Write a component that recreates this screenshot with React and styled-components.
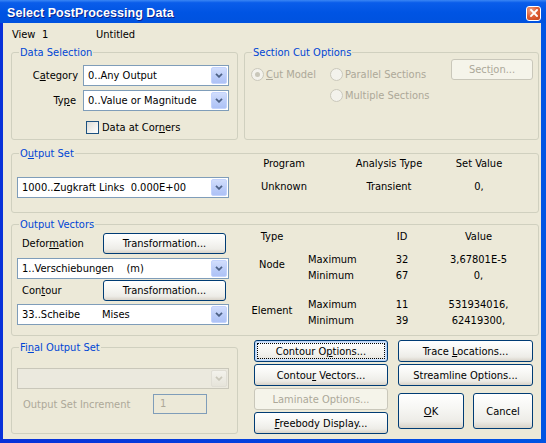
import React from 'react';
import styled, { createGlobalStyle, css } from 'styled-components';

const GlobalStyle = createGlobalStyle`
  html, body { margin: 0; padding: 0; background: #ECE9D8; }
  body {
    font-family: Tahoma, "DejaVu Sans Condensed", "Liberation Sans", sans-serif;
    font-size: 11px;
    color: #000;
  }
  * { box-sizing: border-box; }
`;

const Window = styled.div`
  width: 546px;
  height: 443px;
  display: flex;
  flex-direction: column;
  overflow: hidden;
`;

const TitleBar = styled.div`
  height: 23px;
  flex: none;
  display: flex;
  align-items: center;
  padding: 3px 5px 0 7px;
  background: linear-gradient(180deg, #3A86F4 0%, #0A5DEA 12%, #0054E3 55%, #0052DF 100%);
`;

const TitleText = styled.div`
  flex: 1;
  color: #fff;
  font-family: "Trebuchet MS", "Liberation Sans", sans-serif;
  font-weight: bold;
  font-size: 12.5px;
  letter-spacing: 0.05px;
  text-shadow: 1px 1px 0 #0A1E8A;
`;

const CloseButton = styled.div`
  width: 15px;
  height: 15px;
  border: 1px solid #fff;
  border-radius: 3px;
  background: radial-gradient(circle at 30% 25%, #F0A184 0%, #E0623A 45%, #C6411A 100%);
  display: flex;
  align-items: center;
  justify-content: center;
`;

const Frame = styled.div`
  flex: 1;
  display: flex;
  padding: 0 5px 4px 3px;
  background: linear-gradient(90deg, #0831D9 0%, #0054E3 100%);
`;

const Body = styled.div`
  flex: 1;
  background: #ECE9D8;
  display: flex;
  flex-direction: column;
  padding: 0 2px 0 8px;
`;

const HeaderRow = styled.div`
  height: 22px;
  flex: none;
  display: flex;
  align-items: center;
  padding-left: 1px;
`;

const HeaderCell = styled.span`
  width: ${p => (p.$w ? `${p.$w}px` : 'auto')};
`;

const TopRow = styled.div`
  display: flex;
  flex: none;
  gap: 6px;
  margin-top: 7px;
  height: 88px;
`;

const GroupBox = styled.div`
  position: relative;
  border: 1px solid #D0D0BF;
  border-radius: 3px;
  width: ${p => (p.$w ? `${p.$w}px` : 'auto')};
  flex: ${p => (p.$grow ? '1' : 'none')};
  height: ${p => p.$h}px;
  margin-top: ${p => p.$mt || 0}px;
`;

const Caption = styled.span`
  position: absolute;
  top: -7px;
  left: 7px;
  padding: 0 1px;
  line-height: 13px;
  background: #ECE9D8;
  color: #0046D5;
`;

const Key = styled.span`
  text-decoration: underline;
`;

const DataGrid = styled.div`
  display: grid;
  grid-template-columns: 66px 146px;
  grid-auto-rows: 21px;
  column-gap: 5px;
  row-gap: 4px;
  padding-top: 12px;
  align-items: center;
`;

const FieldLabel = styled.span`
  text-align: right;
  padding-right: ${p => p.$pr || 0}px;
`;

const CheckRow = styled.label`
  grid-column: 2;
  display: flex;
  align-items: center;
  gap: 3px;
  padding-left: 3px;
  margin-top: 6px;
  height: 13px;
  align-self: start;
`;

const CheckBox = styled.span`
  width: 13px;
  height: 13px;
  border: 1px solid #1C5180;
  background: linear-gradient(135deg, #DCDCD7 0%, #F2F2EF 60%, #FFFFFF 100%);
`;

const ComboBox = styled.div`
  width: ${p => p.$w}px;
  height: 21px;
  flex: none;
  margin-top: ${p => p.$mt || 0}px;
  display: flex;
  align-items: center;
  padding: 1px;
  border: 1px solid ${p => (p.$disabled ? '#C9C7BA' : '#7F9DB9')};
  background: ${p => (p.$disabled ? '#EBE9DE' : '#FFFFFF')};
`;

const ComboText = styled.span`
  flex: 1;
  padding-left: 3px;
  white-space: pre;
  overflow: hidden;
`;

const ComboArrow = styled.span`
  width: 16px;
  height: 17px;
  border-radius: 2px;
  display: flex;
  align-items: center;
  justify-content: center;
  ${p =>
    p.$disabled
      ? css`
          border: 1px solid #E0DED5;
          background: linear-gradient(180deg, #F3F2EC, #E6E4DA);
        `
      : css`
          border: 1px solid #C3D3FD;
          background: linear-gradient(180deg, #D2DEFC 0%, #B9CBF8 60%, #AEC2F6 100%);
        `}
`;

const Chevron = ({ color }) => (
  <svg width="8" height="5" viewBox="0 0 8 5">
    <path d="M1 0.8 L4 3.8 L7 0.8" fill="none" stroke={color} strokeWidth="1.8" />
  </svg>
);

const Combo = ({ w, mt, disabled, children }) => (
  <ComboBox $w={w} $mt={mt} $disabled={disabled}>
    <ComboText>{children}</ComboText>
    <ComboArrow $disabled={disabled}>
      <Chevron color={disabled ? '#C9C7BA' : '#4D6185'} />
    </ComboArrow>
  </ComboBox>
);

const Button = styled.button`
  font: inherit;
  color: #000;
  padding: 0;
  width: ${p => (p.$w ? `${p.$w}px` : '100%')};
  height: ${p => p.$h || 22}px;
  border: 1px solid #003C74;
  border-radius: 3px;
  background: linear-gradient(180deg, #FFFFFF 0%, #F7F7F4 40%, #EDECE7 80%, #D8D3C9 100%);
  flex: none;
  ${p =>
    p.$default &&
    css`
      box-shadow: inset 0 0 0 1px #BCD4F6, inset 0 0 0 2px #CEE3FC;
      outline: 1px dotted #000;
      outline-offset: -4px;
    `}
  &:disabled {
    border-color: #C9C7BA;
    background: #F5F4EA;
    color: #ACA899;
  }
`;

const SectionLayout = styled.div`
  display: flex;
  padding: 6px 5px 0 6px;
`;

const RadioColumn = styled.div`
  display: flex;
  flex-direction: column;
  gap: 8px;
  margin-top: 9px;
  width: ${p => (p.$w ? `${p.$w}px` : 'auto')};
`;

const RadioOption = styled.div`
  display: flex;
  align-items: center;
  gap: 2px;
  height: 13px;
  color: #ACA899;
  white-space: nowrap;
`;

const RadioDot = styled.span`
  width: 13px;
  height: 13px;
  border-radius: 50%;
  border: 1px solid #CAC8BB;
  background: #F3F2EC;
  display: flex;
  align-items: center;
  justify-content: center;
  &::after {
    content: '';
    display: ${p => (p.$checked ? 'block' : 'none')};
    width: 5px;
    height: 5px;
    border-radius: 50%;
    background: #C9C7BA;
  }
`;

const Spacer = styled.div`
  flex: 1;
`;

const OutputSetLayout = styled.div`
  display: flex;
  align-items: flex-start;
  padding-left: 5px;
`;

const InfoGrid = styled.div`
  display: grid;
  grid-template-columns: 80px 130px 50px;
  grid-auto-rows: 14px;
  row-gap: 9px;
  margin: 3px 0 0 15px;
  text-align: center;
  line-height: 14px;
  white-space: nowrap;
`;

const VectorsLayout = styled.div`
  display: flex;
  align-items: flex-start;
  padding-left: 5px;
`;

const LeftCol = styled.div`
  width: 212px;
  display: flex;
  flex-direction: column;
  padding-top: 8px;
`;

const VecRow = styled.div`
  height: 21px;
  flex: none;
  margin-top: ${p => p.$mt || 0}px;
  display: flex;
  align-items: center;
  justify-content: space-between;
  padding: 0 3px 0 5px;
`;

const VectorTable = styled.div`
  display: flex;
  flex-direction: column;
  margin: 4px 0 0 23px;
`;

const TableRow = styled.div`
  display: grid;
  grid-template-columns: 40px 78px 64px 89px;
  grid-auto-rows: 16px;
  margin-top: ${p => p.$mt || 0}px;
  line-height: 16px;
  white-space: nowrap;
`;

const Cell = styled.span`
  text-align: ${p => p.$align || 'center'};
  padding-left: ${p => p.$pl || 0}px;
`;

const EntityCell = styled.span`
  grid-row: span 2;
  display: flex;
  align-items: center;
  justify-content: center;
  padding-bottom: ${p => p.$lift || 0}px;
`;

const BottomRow = styled.div`
  display: flex;
  flex: none;
  align-items: flex-start;
  margin-top: 4px;
`;

const FinalLayout = styled.div`
  display: flex;
  flex-direction: column;
  padding-left: 5px;
`;

const IncRow = styled.div`
  display: flex;
  align-items: center;
  height: 20px;
  margin-top: 5px;
`;

const IncLabel = styled.span`
  width: 136px;
  padding-left: 6px;
  color: #ACA899;
`;

const IncInput = styled.div`
  width: 54px;
  height: 20px;
  border: 1px solid #7F9DB9;
  background: #ECE9D8;
  color: #ACA899;
  padding-left: 6px;
  line-height: 18px;
`;

const ButtonPanel = styled.div`
  display: grid;
  grid-template-columns: 134px 135px;
  column-gap: 10px;
  margin-left: 16px;
`;

const ButtonStack = styled.div`
  display: flex;
  flex-direction: column;
  gap: 2px;
`;

const OkRow = styled.div`
  display: flex;
  gap: 9px;
  margin-top: 5px;
`;

export default function App() {
  return (
    <>
      <GlobalStyle />
      <Window>
        <TitleBar>
          <TitleText>Select PostProcessing Data</TitleText>
          <CloseButton>
            <svg width="8" height="8" viewBox="0 0 8 8">
              <path d="M1 1 L7 7 M7 1 L1 7" stroke="#fff" strokeWidth="1.9" strokeLinecap="square" />
            </svg>
          </CloseButton>
        </TitleBar>
        <Frame>
          <Body>
            <HeaderRow>
              <HeaderCell $w={30}>View</HeaderCell>
              <HeaderCell $w={54}>1</HeaderCell>
              <HeaderCell>Untitled</HeaderCell>
            </HeaderRow>

            <TopRow>
              <GroupBox $w={227} $h={88}>
                <Caption>Data Selection</Caption>
                <DataGrid>
                  <FieldLabel>
                    C<Key>a</Key>tegory
                  </FieldLabel>
                  <Combo w={146}>0..Any Output</Combo>
                  <FieldLabel $pr={2}>
                    Ty<Key>p</Key>e
                  </FieldLabel>
                  <Combo w={146}>0..Value or Magnitude</Combo>
                  <CheckRow>
                    <CheckBox />
                    <span>
                      Data at Cor<Key>n</Key>ers
                    </span>
                  </CheckRow>
                </DataGrid>
              </GroupBox>

              <GroupBox $grow $h={88}>
                <Caption>Section Cut Options</Caption>
                <SectionLayout>
                  <RadioColumn $w={79}>
                    <RadioOption>
                      <RadioDot $checked />
                      <span>
                        <Key>C</Key>ut Model
                      </span>
                    </RadioOption>
                  </RadioColumn>
                  <RadioColumn>
                    <RadioOption>
                      <RadioDot />
                      <span>Parallel Sections</span>
                    </RadioOption>
                    <RadioOption>
                      <RadioDot />
                      <span>Multiple Sections</span>
                    </RadioOption>
                  </RadioColumn>
                  <Spacer />
                  <Button $w={82} $h={21} disabled>
                    Sect<Key>i</Key>on...
                  </Button>
                </SectionLayout>
              </GroupBox>
            </TopRow>

            <GroupBox $h={60} $mt={13}>
              <Caption>
                O<Key>u</Key>tput Set
              </Caption>
              <OutputSetLayout>
                <Combo w={212} mt={23}>1000..Zugkraft Links  0.000E+00</Combo>
                <InfoGrid>
                  <span>Program</span>
                  <span>Analysis Type</span>
                  <span>Set Value</span>
                  <span>Unknown</span>
                  <span>Transient</span>
                  <span>0,</span>
                </InfoGrid>
              </OutputSetLayout>
            </GroupBox>

            <GroupBox $h={112} $mt={11}>
              <Caption>Output Vectors</Caption>
              <VectorsLayout>
                <LeftCol>
                  <VecRow>
                    <span>
                      Defor<Key>m</Key>ation
                    </span>
                    <Button $w={123} $h={21}>Transformation...</Button>
                  </VecRow>
                  <Combo w={212} mt={4}>1..Verschiebungen    (m)</Combo>
                  <VecRow $mt={1}>
                    <span>
                      Con<Key>t</Key>our
                    </span>
                    <Button $w={123} $h={21}>Transformation...</Button>
                  </VecRow>
                  <Combo w={212} mt={3}>33..Scheibe       Mises</Combo>
                </LeftCol>
                <VectorTable>
                  <TableRow>
                    <Cell>Type</Cell>
                    <Cell />
                    <Cell>ID</Cell>
                    <Cell>Value</Cell>
                  </TableRow>
                  <TableRow $mt={7}>
                    <EntityCell $lift={7}>Node</EntityCell>
                    <Cell $align="left" $pl={16}>Maximum</Cell>
                    <Cell>32</Cell>
                    <Cell>3,67801E-5</Cell>
                    <Cell $align="left" $pl={16}>Minimum</Cell>
                    <Cell>67</Cell>
                    <Cell>0,</Cell>
                  </TableRow>
                  <TableRow $mt={13}>
                    <EntityCell $lift={4}>Element</EntityCell>
                    <Cell $align="left" $pl={16}>Maximum</Cell>
                    <Cell>11</Cell>
                    <Cell>531934016,</Cell>
                    <Cell $align="left" $pl={16}>Minimum</Cell>
                    <Cell>39</Cell>
                    <Cell>62419300,</Cell>
                  </TableRow>
                </VectorTable>
              </VectorsLayout>
            </GroupBox>

            <BottomRow>
              <GroupBox $w={227} $h={87} $mt={7}>
                <Caption>
                  Fi<Key>n</Key>al Output Set
                </Caption>
                <FinalLayout>
                  <Combo w={212} mt={20} disabled>
                    {' '}
                  </Combo>
                  <IncRow>
                    <IncLabel>Output Set Increment</IncLabel>
                    <IncInput>1</IncInput>
                  </IncRow>
                </FinalLayout>
              </GroupBox>

              <ButtonPanel>
                <ButtonStack>
                  <Button $default>
                    Contour O<Key>p</Key>tions...
                  </Button>
                  <Button>
                    Contou<Key>r</Key> Vectors...
                  </Button>
                  <Button disabled>Laminate Options...</Button>
                  <Button>
                    <Key>F</Key>reebody Display...
                  </Button>
                </ButtonStack>
                <ButtonStack>
                  <Button>
                    Trace <Key>L</Key>ocations...
                  </Button>
                  <Button>Streamline Options...</Button>
                  <OkRow>
                    <Button $w={66} $h={36}>
                      <Key>O</Key>K
                    </Button>
                    <Button $w={60} $h={36}>Cancel</Button>
                  </OkRow>
                </ButtonStack>
              </ButtonPanel>
            </BottomRow>
          </Body>
        </Frame>
      </Window>
    </>
  );
}
